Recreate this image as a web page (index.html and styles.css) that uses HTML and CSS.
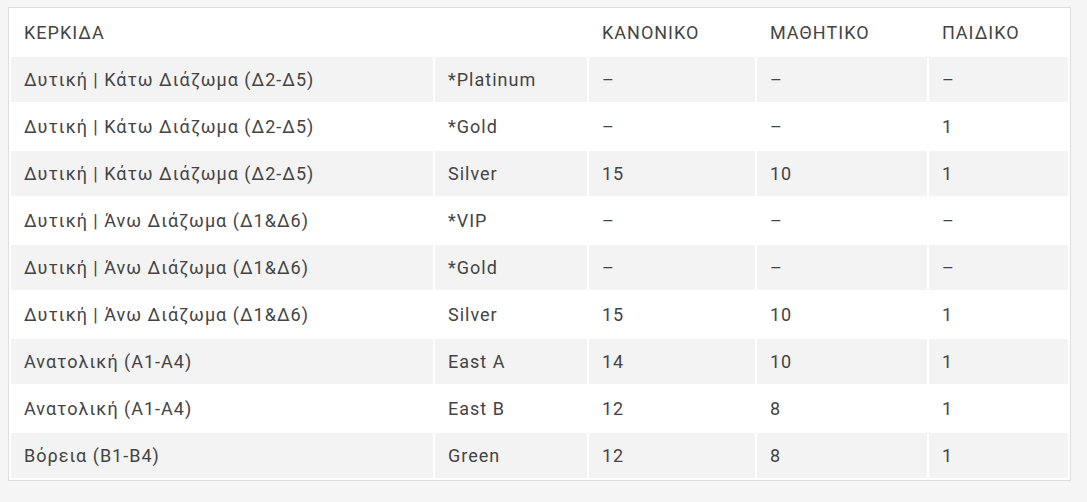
FILE: index.html
```html
<!DOCTYPE html>
<html lang="el">
<head>
<meta charset="utf-8">
<link rel="stylesheet" href="styles.css">
</head>
<body>
<table class="prices">
  <thead>
    <tr><th class="c1">ΚΕΡΚΙΔΑ</th><th class="c2"></th><th class="c3">ΚΑΝΟΝΙΚΟ</th><th class="c4">ΜΑΘΗΤΙΚΟ</th><th class="c5">ΠΑΙΔΙΚΟ</th></tr>
  </thead>
  <tbody>
    <tr><td>Δυτική | Κάτω Διάζωμα (Δ2-Δ5)</td><td>*Platinum</td><td>–</td><td>–</td><td>–</td></tr>
    <tr><td>Δυτική | Κάτω Διάζωμα (Δ2-Δ5)</td><td>*Gold</td><td>–</td><td>–</td><td>1</td></tr>
    <tr><td>Δυτική | Κάτω Διάζωμα (Δ2-Δ5)</td><td>Silver</td><td>15</td><td>10</td><td>1</td></tr>
    <tr><td>Δυτική | Άνω Διάζωμα (Δ1&amp;Δ6)</td><td>*VIP</td><td>–</td><td>–</td><td>–</td></tr>
    <tr><td>Δυτική | Άνω Διάζωμα (Δ1&amp;Δ6)</td><td>*Gold</td><td>–</td><td>–</td><td>–</td></tr>
    <tr><td>Δυτική | Άνω Διάζωμα (Δ1&amp;Δ6)</td><td>Silver</td><td>15</td><td>10</td><td>1</td></tr>
    <tr><td>Ανατολική (Α1-Α4)</td><td>East A</td><td>14</td><td>10</td><td>1</td></tr>
    <tr><td>Ανατολική (Α1-Α4)</td><td>East B</td><td>12</td><td>8</td><td>1</td></tr>
    <tr><td>Βόρεια (Β1-Β4)</td><td>Green</td><td>12</td><td>8</td><td>1</td></tr>
  </tbody>
</table>
</body>
</html>
```

FILE: styles.css
```css
html, body {
  margin: 0;
  padding: 0;
  background: #f5f5f5;
}
body {
  padding: 7px 0 0 8px;
  font-family: Roboto, "Noto Sans", sans-serif;
  color: #444;
}
.prices {
  width: 1063px;
  border: 1px solid #dedede;
  border-spacing: 2px;
  background: #fff;
  table-layout: fixed;
}
.prices th,
.prices td {
  height: 45px;
  padding: 0 0 0 13px;
  font-size: 18px;
  font-weight: 400;
  letter-spacing: 1px;
  text-align: left;
  vertical-align: middle;
  box-sizing: border-box;
}
.prices .c1 { width: 422px; }
.prices .c2 { width: 152px; }
.prices .c3 { width: 166px; }
.prices .c4 { width: 170px; }
.prices .c5 { width: 139px; }
.prices tbody tr:nth-child(odd) td {
  background: #f3f3f3;
}
```
